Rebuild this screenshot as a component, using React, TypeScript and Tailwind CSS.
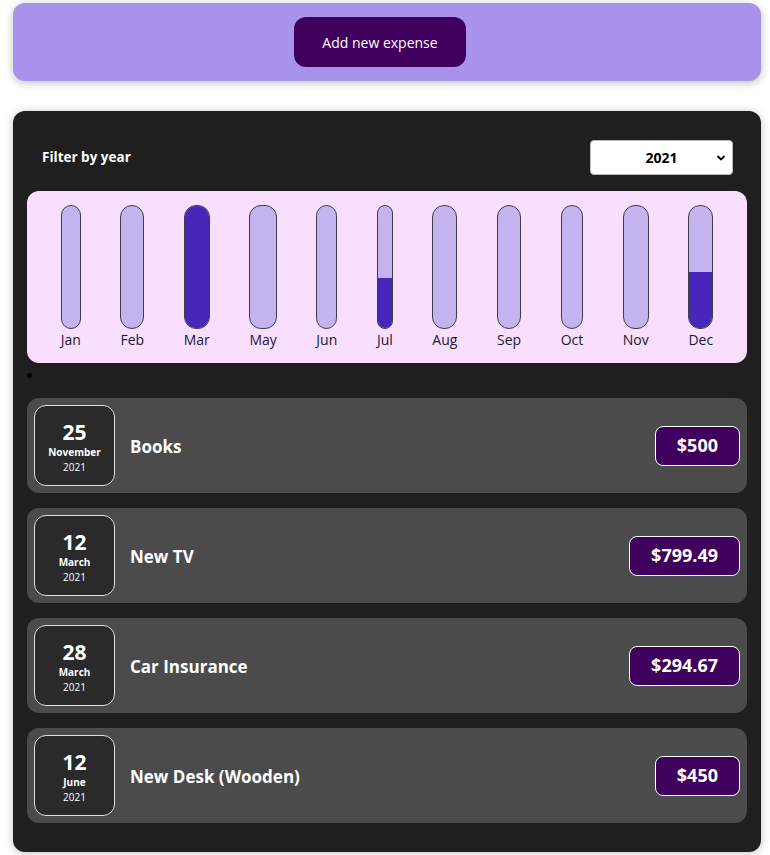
const months = [
  { label: 'Jan', fill: 0 },
  { label: 'Feb', fill: 0 },
  { label: 'Mar', fill: 100 },
  { label: 'May', fill: 0 },
  { label: 'Jun', fill: 0 },
  { label: 'Jul', fill: 41 },
  { label: 'Aug', fill: 0 },
  { label: 'Sep', fill: 0 },
  { label: 'Oct', fill: 0 },
  { label: 'Nov', fill: 0 },
  { label: 'Dec', fill: 46 },
]

const expenses = [
  { id: 'e1', day: '25', month: 'November', year: '2021', title: 'Books', amount: '$500' },
  { id: 'e2', day: '12', month: 'March', year: '2021', title: 'New TV', amount: '$799.49' },
  { id: 'e3', day: '28', month: 'March', year: '2021', title: 'Car Insurance', amount: '$294.67' },
  { id: 'e4', day: '12', month: 'June', year: '2021', title: 'New Desk (Wooden)', amount: '$450' },
]

export default function App() {
  return (
    <main className="min-h-screen bg-white pl-[13px] pr-[9px] pt-[3px] font-['Open_Sans',sans-serif]">
      {/* New expense */}
      <div className="bg-[#a892ec] rounded-xl shadow-[0_2px_8px_rgba(0,0,0,0.25)] h-[78px] flex items-center justify-center">
        <button className="bg-[#40005d] text-white text-[14px] rounded-xl w-[172px] h-[50px] mr-[14px]">
          Add new expense
        </button>
      </div>

      {/* Expenses */}
      <div className="bg-[#1f1f1f] rounded-xl mt-[30px] px-[14px] pt-[29px] pb-[29px] shadow-[0_1px_8px_rgba(0,0,0,0.25)]">
        <div className="flex items-center justify-between pl-[15px] pr-[14px]">
          <span className="text-white font-bold text-[13.5px]">Filter by year</span>
          <div className="relative w-[143px] h-[35px] bg-white rounded-[4px] border border-[#bbb] flex items-center justify-center">
            <span className="font-bold text-[14px] text-black">2021</span>
            <svg className="absolute right-[6px] top-[13px]" width="10" height="8" viewBox="0 0 10 8">
              <path d="M1.5 2 L5 5.5 L8.5 2" fill="none" stroke="#000" strokeWidth="1.8" />
            </svg>
          </div>
        </div>

        {/* Chart */}
        <div className="mt-[16px] bg-[#f8dfff] rounded-xl p-[14px] pb-[14px] flex justify-around">
          {months.map(m => (
            <div key={m.label} className="flex flex-col items-center">
              <div className="w-full h-[124px] border border-[#3f3f3f] rounded-xl bg-[#c3b4f0] overflow-hidden flex flex-col justify-end">
                <div className="bg-[#4826b9]" style={{ height: `${m.fill}%` }} />
              </div>
              <span className="text-[14px] text-[#1a1a2e] mt-[1px] leading-[19px]">{m.label}</span>
            </div>
          ))}
        </div>

        <div className="h-[35px] pt-[10px]">
          <div className="w-[5px] h-[5px] rounded-full bg-black" />
        </div>

        <ul className="flex flex-col gap-[15px]">
          {expenses.map(e => (
            <li key={e.id} className="bg-[#4b4b4b] rounded-xl h-[95px] flex items-center px-[7px]">
              <div className="w-[81px] h-[81px] pt-[3px] bg-[#2a2a2a] border border-[#e0e0e0] rounded-xl flex flex-col items-center justify-center text-white">
                <span className="text-[21px] font-bold leading-[24px]">{e.day}</span>
                <span className="text-[10px] font-bold leading-[16px]">{e.month}</span>
                <span className="text-[10px] leading-[15px]">{e.year}</span>
              </div>
              <h2 className="ml-[15px] pt-[2px] flex-1 text-white font-bold text-[17px]">{e.title}</h2>
              <div className="bg-[#40005d] border border-white rounded-lg h-[40px] px-[21px] flex items-center text-white font-bold text-[18px]">
                {e.amount}
              </div>
            </li>
          ))}
        </ul>
      </div>
    </main>
  )
}
